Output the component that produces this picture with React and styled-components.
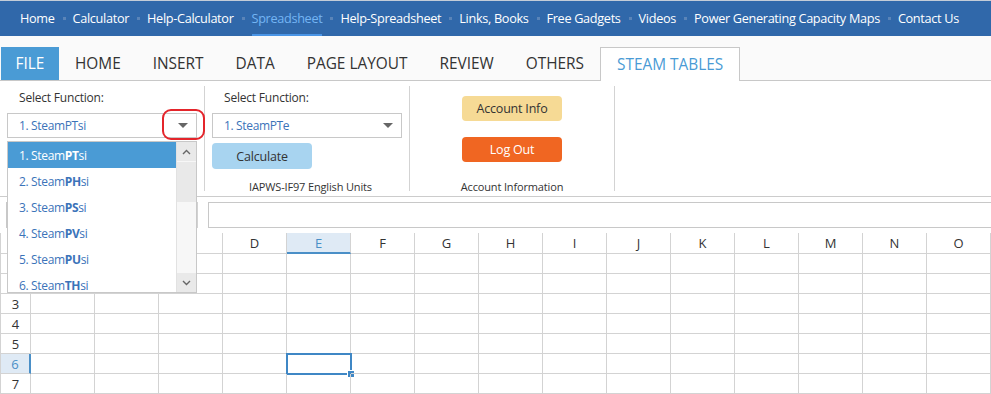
import React from 'react';
import styled, { createGlobalStyle } from 'styled-components';

const GlobalStyle = createGlobalStyle`
  body {
    margin: 0;
    background: #fff;
    font-family: "Open Sans", "Noto Sans", sans-serif;
    overflow: hidden;
  }
`;

const Page = styled.div`
  position: relative;
  width: 991px;
  height: 394px;
  overflow: hidden;
`;

/* top site navigation */
const Nav = styled.nav`
  display: flex;
  height: 35px;
  padding-left: 20px;
  background: #3068aa;
  border-top: 1px solid #c3ccd8;
`;

const NavItem = styled.a`
  display: flex;
  align-items: center;
  padding-top: 1px;
  font-size: 12.7px;
  letter-spacing: -0.32px;
  color: ${p => (p.$active ? '#74b5f4' : '#fff')};
  border-bottom: 2px solid ${p => (p.$active ? '#4a95e6' : 'transparent')};
  white-space: nowrap;
`;

const NavDot = styled.span`
  align-self: center;
  width: 3px;
  height: 3px;
  margin: 0 7px 0 8px;
  background: #5a84b8;
`;

/* ribbon tabs */
const TabBar = styled.div`
  display: flex;
  align-items: flex-end;
  height: 44px;
  padding-left: 1px;
  background: #fafafa;
  border-bottom: 1px solid #c8c8c8;
`;

const Tab = styled.div`
  display: flex;
  align-items: center;
  justify-content: center;
  box-sizing: border-box;
  height: ${p => (p.$open ? '34px' : '33px')};
  margin-bottom: ${p => (p.$open ? '-1px' : '0')};
  padding: 0 16px 1px;
  font-size: 15.4px;
  color: ${p => (p.$file ? '#fff' : p.$open ? '#4a9bd5' : '#333')};
  background: ${p => (p.$file ? '#4a9bd5' : p.$open ? '#fff' : 'transparent')};
  border: ${p => (p.$open ? '1px solid #c8c8c8' : 'none')};
  border-bottom: none;
  ${p => p.$file && 'width: 58px;'}
`;

/* ribbon body */
const Ribbon = styled.div`
  display: flex;
  box-sizing: border-box;
  height: 116px;
  padding: 5px 0;
  border-bottom: 1px solid #cccccc;
`;

const Group = styled.div`
  display: flex;
  flex-direction: column;
  align-items: ${p => (p.$center ? 'center' : 'flex-start')};
  box-sizing: border-box;
  width: 205px;
  height: 105px;
  padding: ${p => (p.$center ? '10px 0 0' : '3px 0 0 7px')};
  border-right: 1px solid #d3d3d3;
`;

const Label = styled.div`
  padding-left: 12px;
  font-size: 12px;
  line-height: 18px;
  letter-spacing: -0.2px;
  color: #333;
`;

const Select = styled.div`
  display: flex;
  align-items: center;
  justify-content: space-between;
  box-sizing: border-box;
  width: 190px;
  height: 25px;
  margin-top: 6px;
  padding: 0 8px 0 11px;
  font-size: 12px;
  letter-spacing: -0.35px;
  color: #3b73b9;
  background: #fff;
  border: 1px solid #c8c8c8;
`;

const Caret = styled.span`
  width: 0;
  height: 0;
  border-left: 5px solid transparent;
  border-right: 5px solid transparent;
  border-top: 5px solid #666;
`;

const Button = styled.div`
  display: flex;
  align-items: center;
  justify-content: center;
  width: 100px;
  height: ${p => p.$h || 25}px;
  margin-top: ${p => p.$mt || 0}px;
  border-radius: 4px;
  font-size: 12.5px;
  letter-spacing: -0.2px;
  color: ${p => p.$fg || '#333'};
  background: ${p => p.$bg};
`;

const Caption = styled.div`
  align-self: stretch;
  margin-top: auto;
  margin-bottom: -3px;
  font-size: 11px;
  line-height: 14px;
  letter-spacing: -0.15px;
  text-align: center;
  color: #333;
`;

/* formula bar */
const FormulaRow = styled.div`
  display: flex;
  align-items: center;
  height: 36px;
  padding-left: 6px;
`;

const NameBox = styled.div`
  box-sizing: border-box;
  width: 184px;
  height: 26px;
  border: 1px solid #c8c8c8;
`;

const Splitter = styled.div`
  width: 2px;
  height: 26px;
  margin: 0 10px 0 6px;
  background: #d2d2d2;
`;

const FormulaInput = styled.div`
  flex: 1;
  box-sizing: border-box;
  height: 26px;
  margin-right: -2px;
  border: 1px solid #c8c8c8;
`;

/* sheet grid */
const Sheet = styled.div`
  display: flex;
  flex-direction: column;
`;

const SheetRow = styled.div`
  display: flex;
  height: ${p => (p.$head ? 21 : 20)}px;
`;

const Corner = styled.div`
  box-sizing: border-box;
  width: 31px;
  border-left: 1px solid #d3d3d3;
  border-right: 1px solid #d3d3d3;
  border-bottom: 1px solid #d3d3d3;
`;

const ColHead = styled.div`
  display: flex;
  align-items: center;
  justify-content: center;
  flex: none;
  box-sizing: border-box;
  width: 64px;
  font-size: 13px;
  color: ${p => (p.$hl ? '#4a8fc7' : '#333')};
  background: ${p => (p.$hl ? '#dfeaf5' : '#fff')};
  border-right: 1px solid #d3d3d3;
  border-bottom: ${p => (p.$hl ? '2px solid #4a8fc7' : '1px solid #d3d3d3')};
`;

const RowHead = styled.div`
  display: flex;
  align-items: center;
  justify-content: center;
  box-sizing: border-box;
  width: 31px;
  font-size: 13px;
  color: ${p => (p.$hl ? '#4a8fc7' : '#333')};
  background: ${p => (p.$hl ? '#dfeaf5' : '#fff')};
  border-left: 1px solid #d3d3d3;
  border-right: ${p => (p.$hl ? '2px solid #4a8fc7' : '1px solid #d3d3d3')};
  border-bottom: 1px solid #d3d3d3;
`;

const Cell = styled.div`
  position: relative;
  flex: none;
  box-sizing: border-box;
  width: 64px;
  border-right: 1px solid #d3d3d3;
  border-bottom: 1px solid #d3d3d3;
`;

const Selection = styled.div`
  position: absolute;
  left: -1px;
  top: -1px;
  right: -2px;
  bottom: -2px;
  border: 2px solid #3f87c5;
`;

const Handle = styled.div`
  position: absolute;
  right: -5px;
  bottom: -5px;
  width: 6px;
  height: 6px;
  background: #3f87c5;
  border: 1px solid #fff;
`;

/* open dropdown list over the sheet */
const Dropdown = styled.div`
  position: absolute;
  left: 7px;
  top: 141px;
  display: flex;
  box-sizing: border-box;
  width: 190px;
  height: 152px;
  background: #fff;
  border: 1px solid #c8c8c8;
  overflow: hidden;
`;

const Options = styled.div`
  flex: 1;
`;

const Option = styled.div`
  display: flex;
  align-items: center;
  height: 26px;
  padding-left: 11px;
  font-size: 12px;
  letter-spacing: -0.35px;
  white-space: pre;
  color: ${p => (p.$sel ? '#fff' : '#3b73b9')};
  background: ${p => (p.$sel ? '#4a9bd5' : 'transparent')};
  b {
    font-weight: 700;
  }
`;

const Scrollbar = styled.div`
  display: flex;
  flex-direction: column;
  width: 19px;
  background: #f7f7f7;
  border-left: 1px solid #e2e2e2;
`;

const ScrollBtn = styled.div`
  display: flex;
  align-items: center;
  justify-content: center;
  height: 19px;
  margin-top: ${p => (p.$down ? 'auto' : '0')};
  background: #e9e9e9;
`;

const Thumb = styled.div`
  height: 40px;
  background: #e9e9e9;
  border-top: 1px solid #f7f7f7;
`;

const Highlight = styled.div`
  position: absolute;
  left: 162px;
  top: 109px;
  width: 43px;
  height: 31px;
  box-sizing: border-box;
  border: 2px solid #e4252b;
  border-radius: 9px;
`;

const navLinks = ['Home', 'Calculator', 'Help-Calculator', 'Spreadsheet', 'Help-Spreadsheet', 'Links, Books', 'Free Gadgets', 'Videos', 'Power Generating Capacity Maps', 'Contact Us'];
const tabs = ['HOME', 'INSERT', 'DATA', 'PAGE LAYOUT', 'REVIEW', 'OTHERS'];
const cols = 'ABCDEFGHIJKLMNO'.split('');
const funcs = ['PT', 'PH', 'PS', 'PV', 'PU', 'TH'];

const Chevron = ({ down }) => (
  <svg width="9" height="6" viewBox="0 0 9 6">
    <polyline points={down ? '1,1 4.5,4.5 8,1' : '1,5 4.5,1.5 8,5'} fill="none" stroke="#666" strokeWidth="1.4" />
  </svg>
);

const App = () => (
  <Page>
    <GlobalStyle />
    <Nav>
      {navLinks.map((l, i) => (
        <React.Fragment key={l}>
          {i > 0 && <NavDot />}
          <NavItem $active={l === 'Spreadsheet'}>{l}</NavItem>
        </React.Fragment>
      ))}
    </Nav>

    <TabBar>
      <Tab $file>FILE</Tab>
      {tabs.map(t => <Tab key={t}>{t}</Tab>)}
      <Tab $open>STEAM TABLES</Tab>
    </TabBar>

    <Ribbon>
      <Group>
        <Label>Select Function:</Label>
        <Select>1. SteamPTsi<Caret /></Select>
      </Group>
      <Group>
        <Label>Select Function:</Label>
        <Select>1. SteamPTe<Caret /></Select>
        <Button $bg="#a8d4f0" $h={26} $mt={5}>Calculate</Button>
        <Caption>IAPWS-IF97 English Units</Caption>
      </Group>
      <Group $center>
        <Button $bg="#f6da95">Account Info</Button>
        <Button $bg="#f06622" $fg="#fff" $mt={16}>Log Out</Button>
        <Caption>Account Information</Caption>
      </Group>
    </Ribbon>

    <FormulaRow>
      <NameBox />
      <Splitter />
      <FormulaInput />
    </FormulaRow>

    <Sheet>
      <SheetRow $head>
        <Corner />
        {cols.map(c => <ColHead key={c} $hl={c === 'E'}>{c}</ColHead>)}
      </SheetRow>
      {[1, 2, 3, 4, 5, 6, 7].map(r => (
        <SheetRow key={r}>
          <RowHead $hl={r === 6}>{r}</RowHead>
          {cols.map(c => (
            <Cell key={c}>
              {r === 6 && c === 'E' && (
                <Selection>
                  <Handle />
                </Selection>
              )}
            </Cell>
          ))}
        </SheetRow>
      ))}
    </Sheet>

    <Dropdown>
      <Options>
        {funcs.map((f, i) => (
          <Option key={f} $sel={i === 0}>
            {`${i + 1}. Steam`}<b>{f}</b>si
          </Option>
        ))}
      </Options>
      <Scrollbar>
        <ScrollBtn><Chevron /></ScrollBtn>
        <Thumb />
        <ScrollBtn $down><Chevron down /></ScrollBtn>
      </Scrollbar>
    </Dropdown>

    <Highlight />
  </Page>
);

export default App;
